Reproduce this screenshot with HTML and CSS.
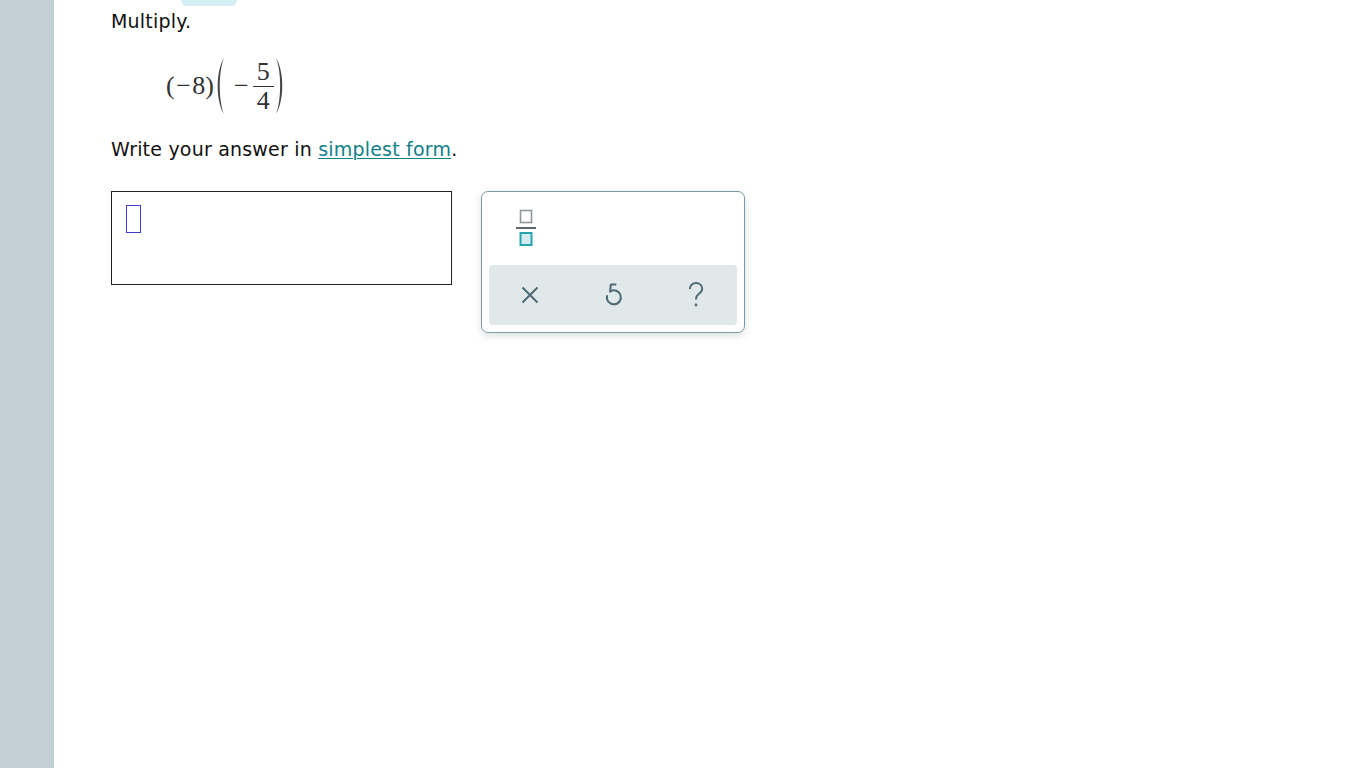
FILE: index.html
```html
<!DOCTYPE html>
<html>
<head>
<meta charset="utf-8">
<link rel="stylesheet" href="styles.css">
</head>
<body>
<div class="page">
  <aside class="sidebar"></aside>
  <main class="content">
    <div class="tab"></div>
    <p class="prompt">Multiply.</p>
    <div class="math">
      <span class="small">(<span class="sm-minus">−</span>8)</span>
      <svg class="bigparen lp" width="10" height="58" viewBox="0 0 10 58"><path d="M9 1 C0.6 14 0.6 44 9 57 C3.4 44 3.4 14 9 1 Z" fill="#444"/></svg>
      <span class="minus">−</span>
      <span class="frac"><span class="top">5</span><span class="bottom">4</span></span>
      <svg class="bigparen rp" width="10" height="58" viewBox="0 0 10 58"><path d="M1 1 C9.4 14 9.4 44 1 57 C6.6 44 6.6 14 1 1 Z" fill="#444"/></svg>
    </div>
    <p class="instr">Write your answer in <a class="link" href="#">simplest form</a>.</p>
    <div class="answer-row">
      <div class="answer-box"><span class="cursor"></span></div>
      <div class="keypad">
        <div class="keypad-top">
          <svg class="frac-icon" width="22" height="38" viewBox="0 0 22 38">
            <rect x="5.5" y="1.5" width="11" height="12" fill="none" stroke="#8d989d" stroke-width="1.6"/>
            <line x1="1" y1="19" x2="21" y2="19" stroke="#5b676d" stroke-width="2"/>
            <rect x="5.5" y="24" width="11" height="12" fill="#d3ebf1" stroke="#26a5ae" stroke-width="2"/>
          </svg>
        </div>
        <div class="keypad-bottom">
          <button class="key">
            <svg width="20" height="20" viewBox="0 0 20 20"><path d="M2.5 2.5 L17.5 17.5 M17.5 2.5 L2.5 17.5" stroke="#4d6a75" stroke-width="2" fill="none"/></svg>
          </button>
          <button class="key">
            <svg width="22" height="26" viewBox="0 0 22 26"><path d="M13.5 2.5 H8.8 L8.2 9.4" stroke="#4d6a75" stroke-width="2" fill="none" stroke-linejoin="round" stroke-linecap="round"/><path d="M8.2 9.4 A7 7 0 1 1 5 14" stroke="#4d6a75" stroke-width="2" fill="none" stroke-linecap="round"/></svg>
          </button>
          <button class="key">
            <svg width="22" height="28" viewBox="0 0 22 28"><path d="M4.8 8 C4.8 4.5 7.6 2 11 2 C14.6 2 17.2 4.5 17.2 7.8 C17.2 10.5 15.5 11.8 13.5 13.2 C11.7 14.5 11 15.7 11 18.5" stroke="#4d6a75" stroke-width="2" fill="none"/><circle cx="11" cy="24" r="1.4" fill="#4d6a75"/></svg>
          </button>
        </div>
      </div>
    </div>
  </main>
</div>
</body>
</html>
```
FILE: styles.css
```css
html, body {
  margin: 0;
  padding: 0;
  background: #fff;
}
.page {
  display: flex;
  min-height: 768px;
}
.sidebar {
  width: 54px;
  flex: none;
  background: #c2cfd4;
}
.content {
  position: relative;
  padding-left: 57px;
  font-family: "DejaVu Sans", Verdana, sans-serif;
  font-size: 19px;
  letter-spacing: 0.2px;
  color: #111;
  flex: 1;
}
.tab {
  position: absolute;
  left: 127px;
  top: 0;
  width: 56px;
  height: 6px;
  background: #d3eff2;
  border-radius: 0 0 8px 8px;
}
.prompt {
  margin: 8px 0 0 0;
  line-height: 26px;
}
.math {
  display: flex;
  align-items: center;
  margin: 22px 0 0 55px;
  height: 60px;
  font-family: "Liberation Serif", serif;
  font-size: 26px;
  letter-spacing: 0;
  color: #333;
}
.small {
  line-height: 30px;
  margin-right: 1px;
}
.sm-minus {
  margin: 0 1.5px;
}
.bigparen {
  flex: none;
}
.minus {
  margin: 0 4px 0 9px;
  line-height: 30px;
}
.frac {
  display: inline-flex;
  flex-direction: column;
  align-items: center;
  margin-right: 1px;
}
.frac .top {
  border-bottom: 1.5px solid #333;
  padding: 0 4px;
  line-height: 28px;
}
.frac .bottom {
  line-height: 28px;
}
.instr {
  margin: 20px 0 0 0;
  line-height: 26px;
}
.link {
  color: #10818a;
  text-decoration: underline;
  text-underline-offset: 2px;
  text-decoration-thickness: 1px;
}
.answer-row {
  display: flex;
  align-items: flex-start;
  margin-top: 29px;
  gap: 29px;
}
.answer-box {
  width: 339px;
  height: 92px;
  border: 1.5px solid #222;
}
.cursor {
  display: block;
  width: 13px;
  height: 26px;
  border: 1.5px solid #3f3fcf;
  margin: 13px 0 0 13.5px;
}
.keypad {
  width: 264px;
  height: 142px;
  border: 1px solid #7c98a3;
  border-radius: 7px;
  box-shadow: 0 3px 8px rgba(60, 90, 100, 0.18);
  display: flex;
  flex-direction: column;
  padding: 0 7px 7px 7px;
  box-sizing: border-box;
}
.keypad-top {
  height: 73px;
  flex: none;
  display: flex;
  align-items: flex-start;
  padding: 17px 0 0 26px;
  box-sizing: border-box;
}
.keypad-bottom {
  flex: 1;
  background: #e1e8ea;
  border-radius: 4px;
  display: flex;
  align-items: center;
  justify-content: space-between;
  padding: 0 30px 0 30px;
}
.key {
  background: none;
  border: 0;
  padding: 0;
  width: 22px;
  display: flex;
  align-items: center;
  justify-content: center;
}
```
